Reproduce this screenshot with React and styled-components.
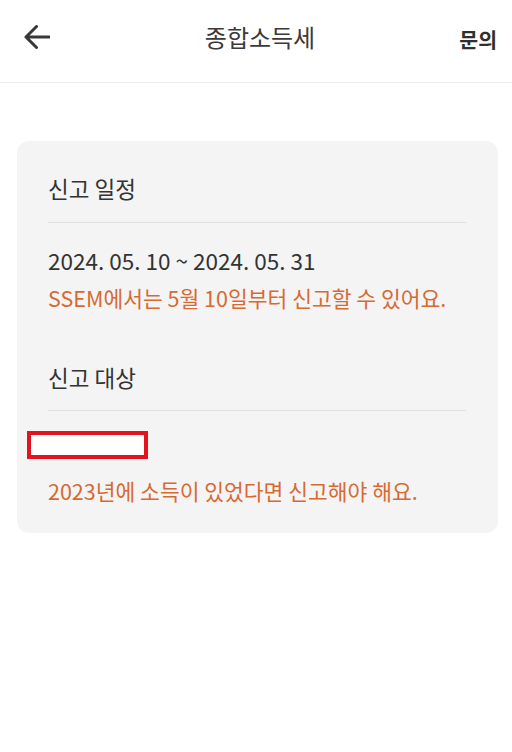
import React from "react";
import styled, { createGlobalStyle } from "styled-components";

const GlobalStyle = createGlobalStyle`
  body {
    margin: 0;
    background: #ffffff;
    font-family: "Noto Sans CJK KR", "Noto Sans", sans-serif;
    color: #333333;
  }
`;

const Page = styled.div`
  width: 512px;
  min-height: 752px;
  background: #ffffff;
`;

const Header = styled.header`
  height: 83px;
  box-sizing: border-box;
  display: grid;
  grid-template-columns: 80px 1fr 80px;
  align-items: start;
  padding: 22px 15px 0 23px;
  border-bottom: 1px solid #ececec;
`;

const BackButton = styled.button`
  border: none;
  background: none;
  padding: 3px 0 0;
  width: 28px;
  height: 30px;
  cursor: pointer;
  justify-self: start;
`;

const Title = styled.h1`
  margin: 0;
  text-align: center;
  font-size: 24px;
  font-weight: 400;
  line-height: 30px;
  color: #3a3a3a;
`;

const Inquiry = styled.a`
  justify-self: end;
  font-size: 20.5px;
  font-weight: 700;
  line-height: 30px;
  margin-top: 2px;
  color: #2f2f2f;
  text-decoration: none;
`;

const Card = styled.section`
  margin: 58px 14px 0 17px;
  background: #f4f4f4;
  border-radius: 12px;
  padding: 32px 32px 27px 31px;
`;

const Heading = styled.h2`
  margin: ${(p) => p.$top || 0}px 0 0;
  font-size: 22.5px;
  font-weight: 400;
  line-height: 30px;
  color: #333333;
`;

const Divider = styled.hr`
  border: none;
  height: 1px;
  background: #e0e0e0;
  margin: ${(p) => p.$top || 19}px 0 0;
`;

const Text = styled.p`
  margin: ${(p) => p.$top || 0}px 0 0;
  font-size: ${(p) => (p.$accent ? 21.5 : 22.5)}px;
  line-height: 30px;
  color: ${(p) => (p.$accent ? "#d66a33" : "#333333")};
`;

const Redaction = styled.div`
  margin: 20px 0 0 -21px;
  width: 121px;
  height: 28px;
  box-sizing: border-box;
  border: 4px solid #e3131f;
  background: #ffffff;
`;

function BackArrow() {
  return (
    <svg width="26" height="24" viewBox="0 0 26 24" fill="none">
      <path
        d="M2 12H25M12.5 1.5L2 12l10.5 10.5"
        stroke="#383838"
        strokeWidth="3"
        strokeLinecap="round"
        strokeLinejoin="round"
      />
    </svg>
  );
}

export default function App() {
  return (
    <Page>
      <GlobalStyle />
      <Header>
        <BackButton aria-label="뒤로">
          <BackArrow />
        </BackButton>
        <Title>종합소득세</Title>
        <Inquiry href="#inquiry">문의</Inquiry>
      </Header>

      <Card>
        <Heading>신고 일정</Heading>
        <Divider />
        <Text $top={22}>2024. 05. 10 ~ 2024. 05. 31</Text>
        <Text $accent $top={8}>
          SSEM에서는 5월 10일부터 신고할 수 있어요.
        </Text>

        <Heading $top={49}>신고 대상</Heading>
        <Divider $top={18} />
        <Redaction />
        <Text $accent $top={17}>
          2023년에 소득이 있었다면 신고해야 해요.
        </Text>
      </Card>
    </Page>
  );
}
